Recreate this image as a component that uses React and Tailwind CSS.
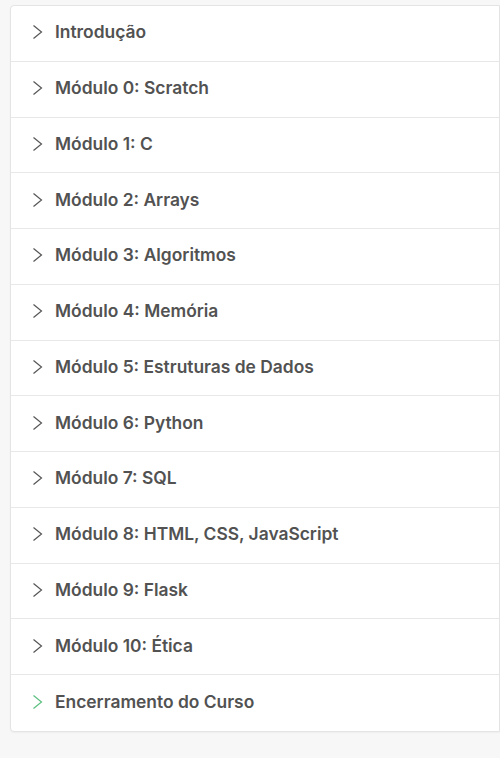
import React from "react";

const items = [
  "Introdução",
  "Módulo 0: Scratch",
  "Módulo 1: C",
  "Módulo 2: Arrays",
  "Módulo 3: Algoritmos",
  "Módulo 4: Memória",
  "Módulo 5: Estruturas de Dados",
  "Módulo 6: Python",
  "Módulo 7: SQL",
  "Módulo 8: HTML, CSS, JavaScript",
  "Módulo 9: Flask",
  "Módulo 10: Ética",
  "Encerramento do Curso",
];

function Chevron({ green }) {
  return (
    <svg width="12" height="18" viewBox="0 0 12 18" className="shrink-0">
      <path
        d="M1.5 2.5 L9.5 9 L1.5 15.5"
        fill="none"
        stroke={green ? "#5cbf7f" : "#555"}
        strokeWidth="1.2"
      />
    </svg>
  );
}

export default function App() {
  return (
    <div className="min-h-[758px] w-[500px] bg-[#f7f7f7] pt-[5px] pl-[10px]" style={{ fontFamily: 'Inter, "Liberation Sans", sans-serif' }}>
      <div className="bg-white border border-[#e4e4e4] rounded-l-[4px] shadow-[0_1px_2px_rgba(0,0,0,0.04)]">
        {items.map((t, i) => (
          <div
            key={t}
            className={`flex items-center h-[55.75px] pl-[21px] gap-[11px] pb-[2px] ${i < items.length - 1 ? "border-b border-[#e8e8e8]" : ""}`}
          >
            <Chevron green={i === items.length - 1} />
            <span className="text-[17.4px] font-semibold text-[#525252] tracking-[0px]">{t}</span>
          </div>
        ))}
      </div>
    </div>
  );
}
